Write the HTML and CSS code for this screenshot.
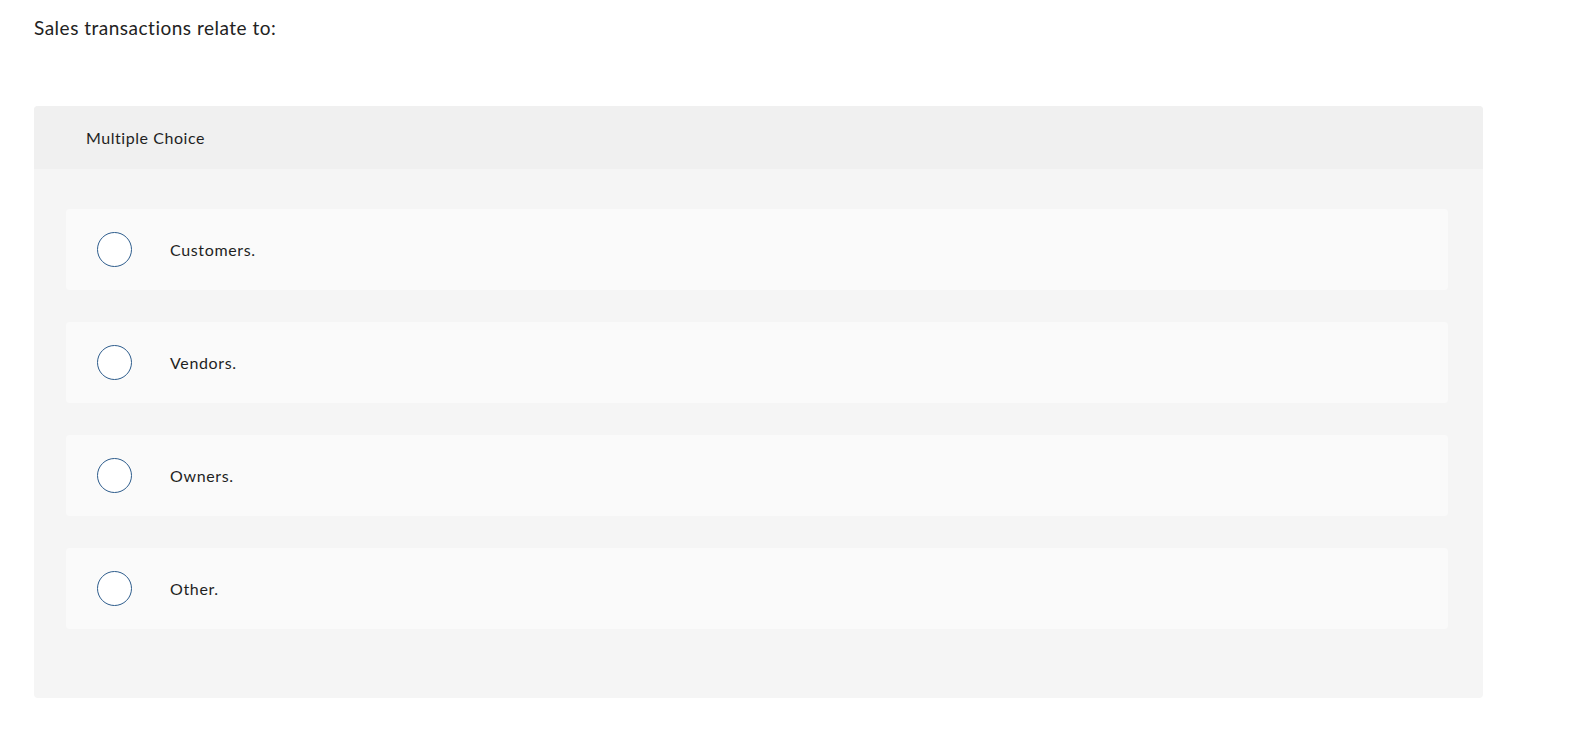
FILE: index.html
```html
<!DOCTYPE html>
<html lang="en">
<head>
<meta charset="utf-8">
<title>Sales transactions relate to</title>
<link rel="stylesheet" href="styles.css">
</head>
<body>
<main class="page">
  <p class="question">Sales transactions relate to:</p>
  <section class="card">
    <header class="card-header">Multiple Choice</header>
    <div class="card-body">
      <label class="option"><span class="radio"></span><span class="option-text">Customers.</span></label>
      <label class="option"><span class="radio"></span><span class="option-text">Vendors.</span></label>
      <label class="option"><span class="radio"></span><span class="option-text">Owners.</span></label>
      <label class="option"><span class="radio"></span><span class="option-text">Other.</span></label>
    </div>
  </section>
</main>
</body>
</html>
```
FILE: styles.css
```css
html, body {
  margin: 0;
  padding: 0;
  background: #ffffff;
}
body {
  font-family: Lato, "Open Sans", Arial, sans-serif;
  color: #1f1f1f;
}
.page {
  padding: 14px 109px 0 34px;
}
.question {
  margin: 0;
  font-size: 19px;
  line-height: 28px;
  letter-spacing: 0.5px;
  color: #222;
}
.card {
  margin-top: 64px;
  width: 1449px;
  border-radius: 4px;
  overflow: hidden;
  background: #f5f5f5;
}
.card-header {
  background: #f0f0f0;
  height: 63px;
  display: flex;
  align-items: center;
  padding-left: 52px;
  padding-bottom: 1px;
  box-sizing: border-box;
  font-size: 16px;
  letter-spacing: 0.55px;
  color: #1f1f1f;
}
.card-body {
  display: flex;
  flex-direction: column;
  gap: 32px;
  padding: 40px 35px 69px 32px;
}
.option {
  height: 81px;
  background: #fafafa;
  border-radius: 4px;
  display: flex;
  align-items: center;
  padding-left: 31px;
}
.radio {
  width: 33px;
  height: 33px;
  border: 1.3px solid #2d5c8c;
  border-radius: 50%;
  background: #fff;
  flex: none;
}
.option-text {
  margin-left: 38px;
  font-size: 16px;
  letter-spacing: 0.65px;
  color: #1f1f1f;
}
```
